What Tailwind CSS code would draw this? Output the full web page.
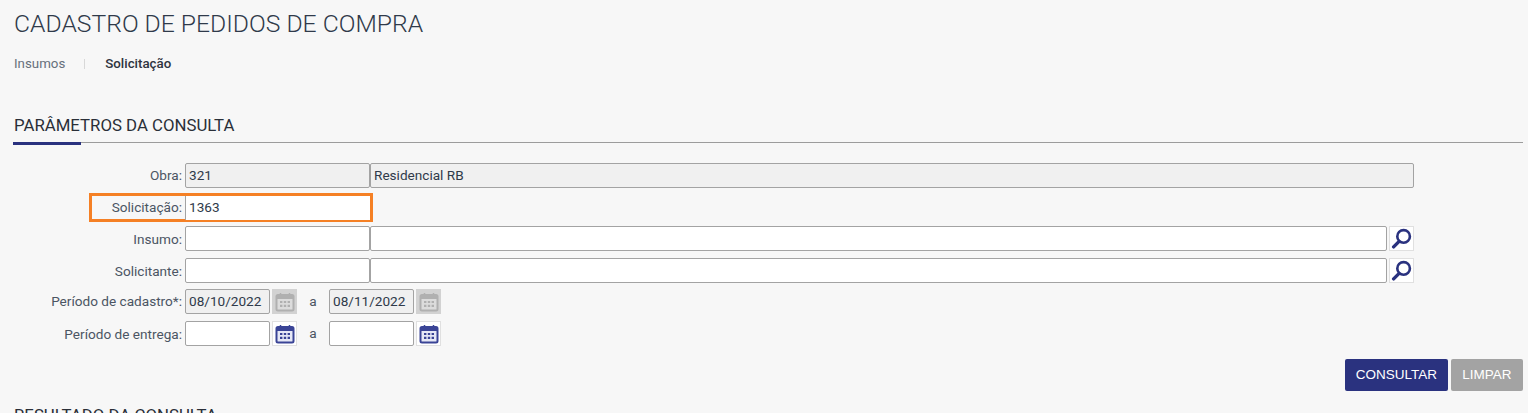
<!DOCTYPE html>
<html lang="pt">
<head>
<meta charset="utf-8">
<script src="https://cdn.jsdelivr.net/npm/@tailwindcss/browser@4"></script>
<title>Cadastro de pedidos de compra</title>
</head>
<body class="bg-[#f7f7f7] font-['Roboto',sans-serif] overflow-hidden h-[413px]">
<div class="pl-[14px] pr-[5px]">
  <h1 class="pt-[9px] h-[47px] text-[24.7px] leading-[30px] font-light text-[#2f3a4a]">CADASTRO DE PEDIDOS DE COMPRA</h1>
  <nav class="flex items-center h-[20px] mt-[7px] text-[13.3px]">
    <span class="text-[#66707c]">Insumos</span>
    <span class="ml-[19px] w-px h-[10px] bg-[#d8d8d8]"></span>
    <span class="ml-[20px] font-medium text-[#2e3440]">Solicitação</span>
  </nav>
  <h2 class="mt-[41px] h-[20px] text-[16.8px] leading-[20px] text-[#2a2f38]">PARÂMETROS DA CONSULTA</h2>
  <div class="relative mt-[7px] h-[2px] -ml-px">
    <div class="h-px bg-[#9c9c9c]"></div>
    <div class="absolute left-0 top-0 w-[68px] h-[3px] bg-[#2a327f]"></div>
  </div>
</div>

<form class="mt-[19px] flex flex-col text-[13.6px] text-[#4b5563]">
  <div class="flex items-center h-[25px]">
    <label class="w-[182px] text-right">Obra:</label>
    <div class="ml-[3px] w-[185px] h-[25px] px-[3px] flex items-center border border-[#a3a3a3] rounded-[2px] bg-[#f0f0f0] text-[#2f3a4a]">321</div>
    <div class="w-[1044px] h-[25px] px-[3px] flex items-center border border-[#a3a3a3] rounded-[2px] bg-[#f0f0f0] text-[#2f3a4a]">Residencial RB</div>
  </div>
  <div class="relative flex items-center h-[25px] mt-[7px]">
    <span class="absolute left-[89px] top-[-2px] w-[284px] h-[29px] border-[3px] border-[#f58025]"></span>
    <label class="w-[182px] text-right relative">Solicitação:</label>
    <div class="ml-[3px] w-[185px] h-[24px] px-[3px] flex items-center bg-white border-l border-[#a3a3a3] text-[#2f3a4a] relative">1363</div>
  </div>
  <div class="flex items-center h-[25px] mt-[6px]">
    <label class="w-[182px] text-right pt-px">Insumo:</label>
    <div class="ml-[3px] w-[185px] h-[25px] border border-[#a3a3a3] rounded-[2px] bg-white"></div>
    <div class="w-[1017px] h-[25px] border border-[#a3a3a3] rounded-[2px] bg-white"></div>
    <button type="button" class="ml-[2px] w-[25px] h-[25px] flex items-center justify-center border border-[#e0e0e0] bg-white">
      <svg width="21" height="21" viewBox="0 0 20 20" fill="none" stroke="#2a327f"><circle cx="12" cy="8" r="6" stroke-width="2.5"/><path d="M7.5 13 2.5 18" stroke-width="3.2" stroke-linecap="round"/></svg>
    </button>
  </div>
  <div class="flex items-center h-[25px] mt-[7px]">
    <label class="w-[182px] text-right pt-px">Solicitante:</label>
    <div class="ml-[3px] w-[185px] h-[25px] border border-[#a3a3a3] rounded-[2px] bg-white"></div>
    <div class="w-[1017px] h-[25px] border border-[#a3a3a3] rounded-[2px] bg-white"></div>
    <button type="button" class="ml-[2px] w-[25px] h-[25px] flex items-center justify-center border border-[#e0e0e0] bg-white">
      <svg width="21" height="21" viewBox="0 0 20 20" fill="none" stroke="#2a327f"><circle cx="12" cy="8" r="6" stroke-width="2.5"/><path d="M7.5 13 2.5 18" stroke-width="3.2" stroke-linecap="round"/></svg>
    </button>
  </div>
  <div class="flex items-center h-[25px] mt-[6px]">
    <label class="w-[182px] text-right">Período de cadastro*:</label>
    <div class="ml-[3px] w-[85px] h-[25px] px-[3px] flex items-center border border-[#a3a3a3] rounded-[2px] bg-[#f0f0f0] text-[#2f3a4a]">08/10/2022</div>
    <button type="button" class="ml-[2px] w-[25px] h-[25px] flex items-center justify-center bg-[#d2d2d2]">
      <svg width="20" height="20" viewBox="0 0 20 20" fill="none"><rect x="1.5" y="3" width="17" height="15.5" rx="1.5" fill="#dcdcdc" stroke="#b0b0b0" stroke-width="2"/><rect x="1.5" y="3" width="17" height="4" fill="#b0b0b0"/><path d="M5.5 1v3M14.5 1v3" stroke="#b0b0b0" stroke-width="1.5"/><path d="M5 10h2.4M8.8 10h2.4M12.6 10h2.4M5 13.8h2.4M8.8 13.8h2.4M12.6 13.8h2.4" stroke="#b0b0b0" stroke-width="2.2"/></svg>
    </button>
    <span class="w-[32px] text-center">a</span>
    <div class="w-[85px] h-[25px] px-[3px] flex items-center border border-[#a3a3a3] rounded-[2px] bg-[#f0f0f0] text-[#2f3a4a]">08/11/2022</div>
    <button type="button" class="ml-[2px] w-[25px] h-[25px] flex items-center justify-center bg-[#d2d2d2]">
      <svg width="20" height="20" viewBox="0 0 20 20" fill="none"><rect x="1.5" y="3" width="17" height="15.5" rx="1.5" fill="#dcdcdc" stroke="#b0b0b0" stroke-width="2"/><rect x="1.5" y="3" width="17" height="4" fill="#b0b0b0"/><path d="M5.5 1v3M14.5 1v3" stroke="#b0b0b0" stroke-width="1.5"/><path d="M5 10h2.4M8.8 10h2.4M12.6 10h2.4M5 13.8h2.4M8.8 13.8h2.4M12.6 13.8h2.4" stroke="#b0b0b0" stroke-width="2.2"/></svg>
    </button>
  </div>
  <div class="flex items-center h-[25px] mt-[7px]">
    <label class="w-[182px] text-right pt-px">Período de entrega:</label>
    <div class="ml-[3px] w-[85px] h-[25px] border border-[#a3a3a3] rounded-[2px] bg-white"></div>
    <button type="button" class="ml-[2px] w-[25px] h-[25px] flex items-center justify-center border border-[#e0e0e0] bg-white">
      <svg width="20" height="20" viewBox="0 0 20 20" fill="none"><rect x="1.5" y="3" width="17" height="15.5" rx="1.5" fill="#e6e8f6" stroke="#3a4496" stroke-width="2"/><rect x="1.5" y="3" width="17" height="4" fill="#3a4496"/><path d="M5.5 1v3M14.5 1v3" stroke="#3a4496" stroke-width="1.5"/><path d="M5 10h2.4M8.8 10h2.4M12.6 10h2.4M5 13.8h2.4M8.8 13.8h2.4M12.6 13.8h2.4" stroke="#3a4496" stroke-width="2.2"/></svg>
    </button>
    <span class="w-[32px] text-center">a</span>
    <div class="w-[85px] h-[25px] border border-[#a3a3a3] rounded-[2px] bg-white"></div>
    <button type="button" class="ml-[2px] w-[25px] h-[25px] flex items-center justify-center border border-[#e0e0e0] bg-white">
      <svg width="20" height="20" viewBox="0 0 20 20" fill="none"><rect x="1.5" y="3" width="17" height="15.5" rx="1.5" fill="#e6e8f6" stroke="#3a4496" stroke-width="2"/><rect x="1.5" y="3" width="17" height="4" fill="#3a4496"/><path d="M5.5 1v3M14.5 1v3" stroke="#3a4496" stroke-width="1.5"/><path d="M5 10h2.4M8.8 10h2.4M12.6 10h2.4M5 13.8h2.4M8.8 13.8h2.4M12.6 13.8h2.4" stroke="#3a4496" stroke-width="2.2"/></svg>
    </button>
  </div>
  <div class="flex justify-end gap-[3px] mt-[13px] pr-[5px] font-['Liberation_Sans',sans-serif] text-[13.5px] text-white">
    <button type="button" class="w-[103px] h-[32px] rounded-[2px] bg-[#2a327f]">CONSULTAR</button>
    <button type="button" class="w-[72px] h-[32px] rounded-[2px] bg-[#a3a3a3]">LIMPAR</button>
  </div>
</form>
<h2 class="pl-[14px] mt-[14px] text-[16.8px] leading-[20px] text-[#2a2f38]">RESULTADO DA CONSULTA</h2>
</body>
</html>
